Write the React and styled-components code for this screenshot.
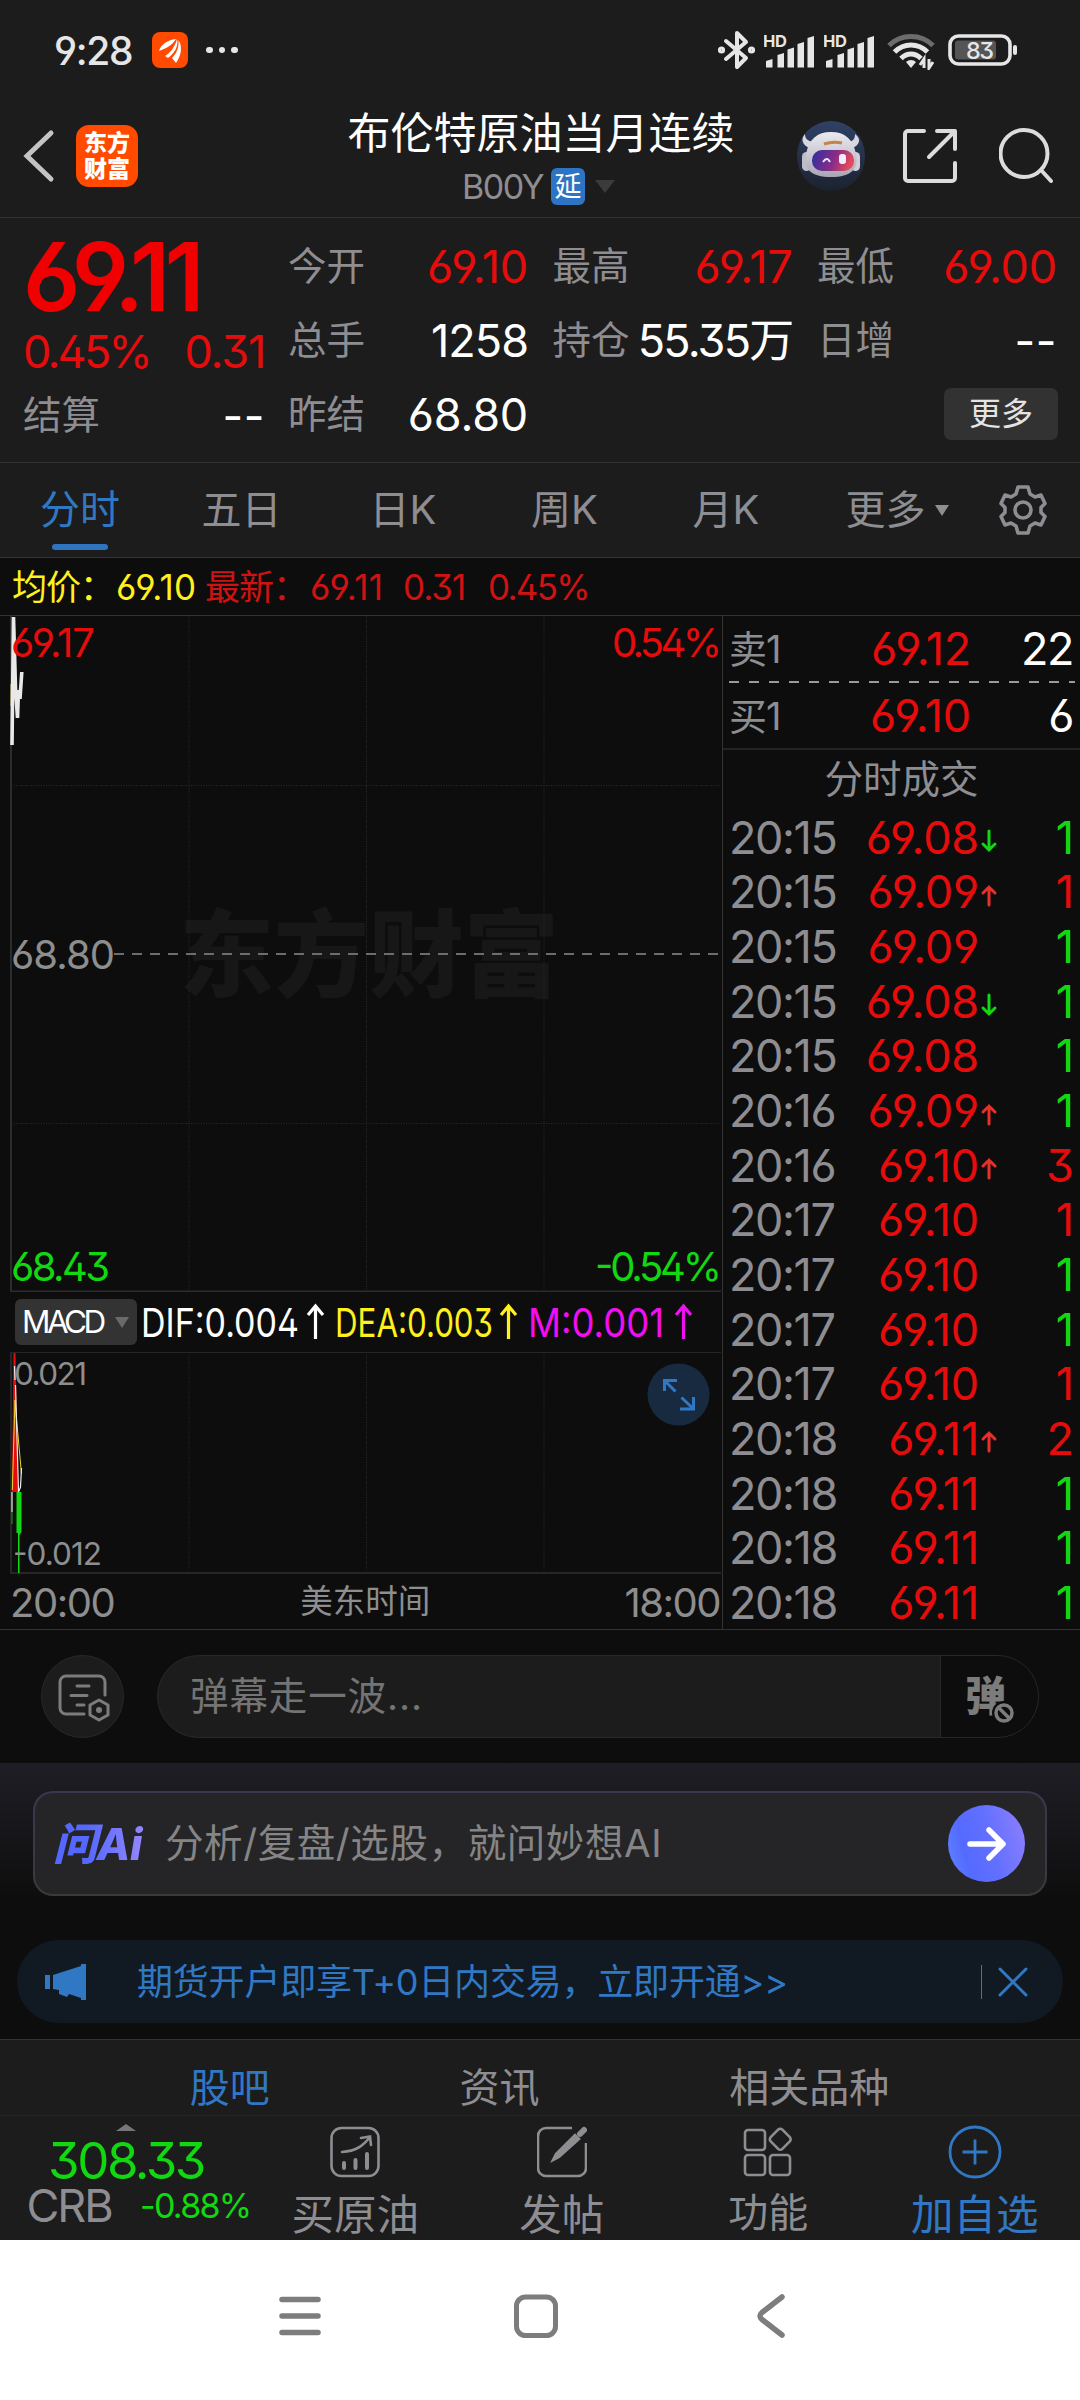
import React from "react";
import styled, { createGlobalStyle } from "styled-components";

const RED = "#e60c0c";
const GREEN = "#12d812";
const GREY = "#8e8d92";
const BLUE = "#3078c4";

const statusBars = [[0, 58], [11.5, 52], [21.5, 46.5], [31.5, 41], [41.5, 35]];

const quotes = [
  { label: "今开", value: "69.10", color: RED },
  { label: "最高", value: "69.17", color: RED },
  { label: "最低", value: "69.00", color: RED },
  { label: "总手", value: "1258", ls: -1 },
  { label: "持仓", value: "55.35万", ls: -1.8 },
  { label: "日增", value: "--", ls: 0.5 },
  { label: "昨结", value: "68.80" },
];

const periods = ["分时", "五日", "日K", "周K", "月K"];

const trades = [
  ["20:15", "69.08", "down", "1", GREEN],
  ["20:15", "69.09", "up", "1", RED],
  ["20:15", "69.09", "", "1", GREEN],
  ["20:15", "69.08", "down", "1", GREEN],
  ["20:15", "69.08", "", "1", GREEN],
  ["20:16", "69.09", "up", "1", GREEN],
  ["20:16", "69.10", "up", "3", RED],
  ["20:17", "69.10", "", "1", RED],
  ["20:17", "69.10", "", "1", GREEN],
  ["20:17", "69.10", "", "1", GREEN],
  ["20:17", "69.10", "", "1", RED],
  ["20:18", "69.11", "up", "2", RED],
  ["20:18", "69.11", "", "1", GREEN],
  ["20:18", "69.11", "", "1", GREEN],
  ["20:18", "69.11", "", "1", GREEN],
];

function Signal() {
  return (
    <svg width="52" height="40" viewBox="0 29 52 40">
      <text x="-1" y="46" fontSize="16.5" fontWeight="700" fill="#e6e6e6" textLength="24">HD</text>
      {statusBars.map(([x, y]) => (
        <path key={x} d={`M${x + 2} 66.5V${y + 2}L${x + 8.5} ${y}V66.5Z`} fill="#e6e6e6" />
      ))}
    </svg>
  );
}

function StatusIcons() {
  return (
    <StatusRight>
      <svg width="38" height="40" viewBox="0 0 38 40" fill="none" stroke="#e6e6e6" strokeWidth="4" strokeLinejoin="round" strokeLinecap="round">
        <path d="M8 11l20 17-9 9V3l9 9L8 29" />
        <circle cx="3.5" cy="20" r="1.6" />
        <circle cx="33.5" cy="20" r="1.6" />
      </svg>
      <Signal />
      <Signal />
      <svg width="48" height="40" viewBox="0 0 48 40" fill="none" strokeWidth="5">
        <path d="M2 15.5C14 3.5 34 3.5 46 15.5" stroke="#6c6c6c" />
        <path d="M7.5 22C17 12.5 31 12.5 40.5 22" stroke="#e6e6e6" />
        <path d="M14 28.5C20 22.5 28 22.5 34 28.5" stroke="#e6e6e6" />
        <path d="M19 32a7 7 0 0 1 10 0l-5 6z" fill="#e6e6e6" />
        <path d="M37 38V29l-4 6M42 29v9l4-6" stroke="#e6e6e6" strokeWidth="3" />
      </svg>
      <svg width="71" height="32" viewBox="0 0 71 32">
        <rect x="2" y="2" width="60" height="28" rx="8.5" fill="none" stroke="#e6e6e6" strokeWidth="3.6" />
        <rect x="7" y="6.5" width="41" height="19" rx="3" fill="#555" />
        <rect x="65" y="11" width="4" height="10" rx="2" fill="#e6e6e6" />
        <text x="18" y="24.5" fontSize="23.5" fontWeight="500" fill="#e6e6e6" textLength="28">83</text>
      </svg>
    </StatusRight>
  );
}

function Robot() {
  return (
    <svg width="68" height="70" viewBox="0 0 68 70">
      <defs>
        <linearGradient id="sky" x1="0" y1="0" x2="0" y2="1">
          <stop offset="0" stopColor="#2f4166" />
          <stop offset="1" stopColor="#1c222e" />
        </linearGradient>
        <linearGradient id="visor" x1="0" y1="0" x2="1" y2="0.2">
          <stop offset="0" stopColor="#2b2f9e" />
          <stop offset="0.6" stopColor="#8a2c86" />
          <stop offset="1" stopColor="#e24a5c" />
        </linearGradient>
        <linearGradient id="shell" x1="0" y1="0" x2="0" y2="1">
          <stop offset="0" stopColor="#eceaf0" />
          <stop offset="1" stopColor="#a9a6b4" />
        </linearGradient>
      </defs>
      <ellipse cx="34" cy="35" rx="34" ry="35" fill="url(#sky)" />
      <path d="M14 28C4 24 4 17 8 13c0 5 3 7 8 8zM54 28c10-4 10-11 4-15 0 5-2 7-6 8z" fill="#d9d7de" />
      <rect x="5" y="31" width="9" height="19" rx="4.5" fill="#bfbdc9" />
      <rect x="54" y="31" width="9" height="19" rx="4.5" fill="#d0ced8" />
      <path d="M34 11c14 0 22 7 25 22 3 15-5 23-25 23S6 48 9 33C12 18 20 11 34 11z" fill="url(#shell)" />
      <rect x="15" y="29" width="42" height="21" rx="10" fill="url(#visor)" />
      <path d="M26 41q4-6 7 0" stroke="#e8e4ff" strokeWidth="2" fill="none" />
      <rect x="42" y="33" width="7" height="10" rx="3" fill="#f2edf7" />
      <path d="M27 23q9-3 18-1" stroke="#c98246" strokeWidth="3" fill="none" />
    </svg>
  );
}

const arrowUp = "M8.5 35V2M1 11L8.5 2L16 11";

function MinuteChart() {
  return (
    <svg width="722" height="676" viewBox="0 616 722 676">
      <text x="179" y="990" fontSize="95" fontWeight="900" fill="#171717">东方财富</text>
      <g stroke="#2b2b2b" strokeDasharray="1 1.5">
        <path d="M189 616V1291M366.5 616V1291M544 616V1291M11 785.5H721M11 1123.5H721" />
      </g>
      <path d="M11 616V1291.5H721" fill="none" stroke="#2c2c2c" strokeWidth="2" />
      <path d="M114 954H721" stroke="#6d6d6d" strokeWidth="2" strokeDasharray="10 8" />
      <path d="M11.5 684V706" stroke="#cfc36a" strokeWidth="2" />
      <path d="M12 745L13.5 617L15.5 688L17.5 718L18.5 690L20 699L21.8 672" fill="none" stroke="#e9e9e9" strokeWidth="3.6" />
      <g fontSize="40">
        <text x="11" y="657" fill={RED} textLength="84">69.17</text>
        <text x="612" y="657" fill={RED} textLength="110">0.54%</text>
        <text x="11" y="969" fill="#8e8e8e" textLength="104">68.80</text>
        <text x="11" y="1281" fill={GREEN} textLength="99">68.43</text>
        <text x="595" y="1281" fill={GREEN} textLength="127">-0.54%</text>
      </g>
    </svg>
  );
}

function MacdChart() {
  return (
    <svg width="722" height="222" viewBox="0 1352 722 222">
      <path d="M189 1352V1573M366.5 1352V1573M544 1352V1573" stroke="#2b2b2b" strokeDasharray="1 1.5" />
      <path d="M11 1352.5H721" stroke="#262626" />
      <path d="M11 1352V1573H721" fill="none" stroke="#262626" strokeWidth="2" />
      <path d="M12 1492L13.5 1353H15.5L18 1492Z" fill="#e60c0c" />
      <path d="M12 1512v12" stroke="#157a15" strokeWidth="1.5" />
      <path d="M16.5 1492h5v40l-2 3v38h-1.5v-40h-1.5z" fill="#12d812" />
      <path d="M12.3 1490L15 1400L16.5 1419L21.5 1474" fill="none" stroke="#e8d72a" />
      <path d="M12 1512V1492M14.5 1366L15 1380M15.5 1385L18.5 1492L20.5 1487L21.5 1468" fill="none" stroke="#efefef" strokeWidth="1.2" />
      <text x="14" y="1385" fontSize="31.5" fill="#8e8e8e" textLength="73">0.021</text>
      <text x="13" y="1565" fontSize="31.5" fill="#8e8e8e" textLength="89">-0.012</text>
      <circle cx="678.5" cy="1394.5" r="31" fill="#172a40" />
      <path d="M664.5 1391V1380.5H677M664.5 1380.5L675.5 1391.5M693.5 1397V1409H680M693.5 1409L681.5 1397.5" fill="none" stroke={BLUE} strokeWidth="3" />
    </svg>
  );
}

function App() {
  return (
    <Screen>
      <GlobalStyle />
      <StatusBar>
        <Clock>9:28</Clock>
        <AppBadge>
          <svg width="36" height="36" viewBox="0 0 36 36" fill="#fff">
            <path d="M7 19c2-7 9-11 17-12-3 5-8 9-17 12zM13 24c5-3 10-9 12-17 2 7-3 15-9 19zM20 26c5-5 7-11 6.5-18C31 15 29 24 24 31z" />
          </svg>
        </AppBadge>
        <Dots><i /><i /><i /></Dots>
        <StatusIcons />
      </StatusBar>

      <TitleBar>
        <BackIcon width="32" height="54" viewBox="0 0 32 54">
          <path d="M28 4L4 27L28 50" fill="none" stroke="#c4c4c4" strokeWidth="5" strokeLinecap="round" />
        </BackIcon>
        <Brand><span>东方</span><span>财富</span></Brand>
        <Heading>
          <h1>布伦特原油当月连续</h1>
          <Symbol>B00Y<Delay>延</Delay><Caret /></Symbol>
        </Heading>
        <HeaderIcons>
          <Robot />
          <svg width="54" height="54" viewBox="0 0 54 54" fill="none" stroke="#dcdcdc" strokeWidth="4" strokeLinecap="round" strokeLinejoin="round">
            <path d="M21 2H5a3 3 0 0 0-3 3V49a3 3 0 0 0 3 3H49a3 3 0 0 0 3-3V34M34 2H52V20M51 3L26 28" />
          </svg>
          <svg width="54" height="56" viewBox="0 0 54 56" fill="none" stroke="#dcdcdc" strokeWidth="4" strokeLinecap="round">
            <circle cx="25" cy="25.5" r="23.5" />
            <path d="M42 42L52 53" />
          </svg>
        </HeaderIcons>
      </TitleBar>

      <QuotePanel>
        <PriceBlock>
          <LastPrice>69.11</LastPrice>
          <Change><span>0.45%</span><span>0.31</span></Change>
          <Quote><label>结算</label><Num $ls={0.5}>--</Num></Quote>
        </PriceBlock>
        <QuoteGrid>
          {quotes.map((q) => (
            <Quote key={q.label} $color={q.color}>
              <label>{q.label}</label>
              <Num $ls={q.ls}>{q.value}</Num>
            </Quote>
          ))}
          <MoreButton>更多</MoreButton>
        </QuoteGrid>
      </QuotePanel>

      <PeriodTabs>
        {periods.map((p, i) => <Period key={p} $active={i === 0}>{p}</Period>)}
        <MorePeriods>更多<SmallCaret /></MorePeriods>
        <svg width="48" height="50" viewBox="0 0 48 50" fill="none" stroke={GREY} strokeWidth="3.6" strokeLinejoin="round">
          <path d="M19 2H29L31 9L36 12L42 10L46 18.5L42 22.5V27.5L46 31.5L42 40L36 38L31 41L29 48H19L17 41L12 38L6 40L2 31.5L6 27.5V22.5L2 18.5L6 10L12 12L17 9Z" />
          <circle cx="24" cy="25" r="8" />
        </svg>
      </PeriodTabs>

      <AverageBar>
        <Avg $w={104} $color="#fff01e">均价：</Avg>
        <Avg $w={89} $ls={0.2} $color="#fff01e">69.10</Avg>
        <Avg $w={105} $color="#d01212">最新：</Avg>
        <Avg $w={93} $ls={0.4} $color="#d01212">69.11</Avg>
        <Avg $w={85} $color="#d01212">0.31</Avg>
        <Avg $w={110} $ls={-1.7} $color="#d01212">0.45%</Avg>
      </AverageBar>

      <Market>
        <Charts>
          <MinuteChart />
          <IndicatorBar>
            <IndicatorButton>MACD<SmallCaret $dim /></IndicatorButton>
            <svg width="580" height="50" viewBox="0 0 580 50" fontSize="39.5">
              <text x="1" y="40" fill="#fff" textLength="158" lengthAdjust="spacingAndGlyphs">DIF:0.004</text>
              <text x="195" y="40" fill="#fff01e" textLength="158" lengthAdjust="spacingAndGlyphs">DEA:0.003</text>
              <text x="388" y="40" fill="#f20ef2" textLength="136" lengthAdjust="spacingAndGlyphs">M:0.001</text>
              <g fill="none" strokeWidth="3.2">
                <path transform="translate(167 7)" d={arrowUp} stroke="#fff" />
                <path transform="translate(360 7)" d={arrowUp} stroke="#fff01e" />
                <path transform="translate(535 7)" d={arrowUp} stroke="#f20ef2" />
              </g>
            </svg>
          </IndicatorBar>
          <MacdChart />
          <TimeAxis><span>20:00</span><small>美东时间</small><span>18:00</span></TimeAxis>
        </Charts>
        <Book>
          <BookRow><label>卖1</label><Num $color={RED}>69.12</Num><Num $ls={-1.5}>22</Num></BookRow>
          <svg width="346" height="2"><path d="M0 1H346" stroke="#9a9a9a" strokeWidth="2" strokeDasharray="10 10" /></svg>
          <BookRow><label>买1</label><Num $color={RED}>69.10</Num><Num $ls={-1.5}>6</Num></BookRow>
          <TradesTitle>分时成交</TradesTitle>
          {trades.map(([time, price, dir, qty, color], i) => (
            <Trade key={i}>
              <Num $ls={-1.4} $color={GREY}>{time}</Num>
              <Num $color={RED}>{price}</Num>
              <svg width="18" height="24" viewBox="0 0 18 24" fill="none" strokeWidth="3" strokeLinecap="round">
                {dir === "up" && <path d="M9 21V3M3 9L9 3L15 9" stroke="#e8302a" />}
                {dir === "down" && <path d="M9 2V21M3 15L9 21L15 15" stroke={GREEN} />}
              </svg>
              <Num $ls={-1} $color={color}>{qty}</Num>
            </Trade>
          ))}
        </Book>
      </Market>

      <CommentBar>
        <RoundButton>
          <svg width="52" height="48" viewBox="0 0 52 48" fill="none" stroke="#7c7c7c" strokeWidth="3" strokeLinecap="round">
            <path d="M26 40H8a6 6 0 0 1-6-6V8a6 6 0 0 1 6-6H41a6 6 0 0 1 6 6V21M19 12H31M13 21.5H29M19 31H26" />
            <path d="M41 26L50 31V41L41 46L32 41V31Z" strokeLinejoin="round" />
            <circle cx="41" cy="36" r="1.5" />
          </svg>
        </RoundButton>
        <CommentInput>
          <span>弹幕走一波...</span>
          <Barrage>
            弹
            <svg width="24" height="24" viewBox="0 0 24 24">
              <circle cx="12" cy="12" r="12" fill="#0d0d0d" />
              <circle cx="12" cy="12" r="8" fill="none" stroke="#7c7c7c" strokeWidth="3.5" />
              <path d="M7 7L17 17" stroke="#7c7c7c" strokeWidth="3.5" />
            </svg>
          </Barrage>
        </CommentInput>
      </CommentBar>

      <AiSection>
        <AiBox>
          <AiLogo>问Ai</AiLogo>
          <span>分析/复盘/选股，就问妙想AI</span>
          <GoButton>
            <svg width="42" height="40" viewBox="0 0 42 40" fill="none" stroke="#fff" strokeWidth="5.5" strokeLinecap="round" strokeLinejoin="round">
              <path d="M4 20H37M23 6L37 20L23 34" />
            </svg>
          </GoButton>
        </AiBox>
      </AiSection>

      <Promo>
        <svg width="44" height="38" viewBox="0 0 44 38" fill={BLUE}>
          <path d="M1 12h5v14H1zM9 12L37 3V1h5V37h-5V35L25 31L23 34L15 31V27L9 26z" />
        </svg>
        <span>期货开户即享T+0日内交易，立即开通&gt;&gt;</span>
        <Rule />
        <svg width="30" height="30" viewBox="0 0 30 30" stroke={BLUE} strokeWidth="3" strokeLinecap="round">
          <path d="M2 2L28 28M28 2L2 28" />
        </svg>
      </Promo>

      <SectionTabs>
        <Section $active>股吧</Section>
        <Section>资讯</Section>
        <Section>相关品种</Section>
      </SectionTabs>

      <BottomBar>
        <IndexBox>
          <UpCaret />
          <IndexValue>308.33</IndexValue>
          <IndexName><b>CRB</b><em>-0.88%</em></IndexName>
        </IndexBox>
        <Action>
          <svg width="50" height="52" viewBox="0 0 50 52" fill="none" stroke={GREY} strokeWidth="2.6" strokeLinecap="round">
            <rect x="1.5" y="2" width="47" height="48" rx="10" />
            <path d="M12 26C26 25 33 20 40 11M31 12L40 10.5L41 19" />
            <path d="M14 37V42M25.5 34V42M37 28V42" strokeWidth="4" />
          </svg>
          买原油
        </Action>
        <Action>
          <svg width="50" height="52" viewBox="0 0 50 52" fill="none" stroke={GREY} strokeWidth="2.6">
            <path d="M35 2H9a8 8 0 0 0-8 8V42a8 8 0 0 0 8 8H41a8 8 0 0 0 8-8V17" />
            <path d="M16 34L19 28L38 9L42 13L22 31Z" fill={GREY} />
            <path d="M43 8L47 4" strokeWidth="6" strokeLinecap="round" />
          </svg>
          发帖
        </Action>
        <Action $size={40}>
          <svg width="50" height="52" viewBox="0 0 50 52" fill="none" stroke={GREY} strokeWidth="2.6">
            <rect x="2" y="4" width="20" height="20" rx="3" />
            <rect x="2" y="29" width="20" height="20" rx="3" />
            <rect x="27" y="29" width="20" height="20" rx="3" />
            <rect x="29" y="5" width="16.5" height="16.5" rx="3" transform="rotate(45 37.25 13.25)" />
          </svg>
          功能
        </Action>
        <Action $color={BLUE}>
          <svg width="54" height="54" viewBox="0 0 54 54" fill="none" stroke={BLUE} strokeWidth="2.8">
            <circle cx="27" cy="27" r="25" />
            <path d="M14.5 27H39.5M27 14.5V39.5" />
          </svg>
          加自选
        </Action>
      </BottomBar>

      <SystemNav>
        <svg width="44" height="46" viewBox="0 0 44 46" stroke="#7d7d7d" strokeWidth="5.5" strokeLinecap="round">
          <path d="M4 6.5H40M4 23H40M4 39.5H40" />
        </svg>
        <svg width="46" height="46" viewBox="0 0 46 46" fill="none" stroke="#7d7d7d" strokeWidth="5">
          <rect x="3.5" y="4" width="39" height="38.5" rx="9" />
        </svg>
        <svg width="30" height="46" viewBox="0 0 30 46" fill="none" stroke="#7d7d7d" strokeWidth="5.5" strokeLinecap="round" strokeLinejoin="round">
          <path d="M26 4L6 19.5Q2 23 6 26.5L26 42" />
        </svg>
      </SystemNav>
    </Screen>
  );
}

export default App;

const GlobalStyle = createGlobalStyle`
    body {
        margin: 0;
        background: #0d0d0d;
    }

    * {
        box-sizing: border-box;
    }

    svg {
        display: block;
        flex: none;
    }
`;

const Screen = styled.div`
    width: 1080px;
    height: 2400px;
    display: flex;
    flex-direction: column;
    overflow: hidden;
    background: #0d0d0d;
    color: #fff;
    font-family: Inter, "Noto Sans CJK SC", sans-serif;
    font-feature-settings: "cv03", "cv04", "cv09", "ss01";
    line-height: 1;
    white-space: nowrap;
`;

const StatusBar = styled.div`
    height: 100px;
    flex: none;
    display: flex;
    align-items: center;
    padding: 0 61px 0 54px;
    background: #1c1c1c;
`;

const Clock = styled.span`
    width: 98px;
    font-size: 39px;
    font-weight: 500;
    letter-spacing: -1.3px;
    color: #e6e6e6;
`;

const AppBadge = styled.span`
    width: 36px;
    height: 36px;
    border-radius: 8px;
    background: #ff4a00;
`;

const Dots = styled.span`
    display: flex;
    gap: 6px;
    margin-left: 18px;

    i {
        width: 6.5px;
        height: 6.5px;
        border-radius: 50%;
        background: #e6e6e6;
    }
`;

const StatusRight = styled.div`
    display: flex;
    align-items: center;
    margin-left: auto;

    svg:nth-child(2), svg:nth-child(3) {
        margin-left: 8px;
    }

    svg:nth-child(4) {
        margin-left: 11px;
    }

    svg:nth-child(5) {
        margin-left: 13px;
    }
`;

const TitleBar = styled.header`
    height: 118px;
    flex: none;
    display: flex;
    align-items: flex-start;
    padding: 0 27px 0 23px;
    background: #1c1c1c;
    border-bottom: 1px solid #333;
`;

const BackIcon = styled.svg`
    margin-top: 29px;
`;

const Brand = styled.div`
    width: 62px;
    height: 62px;
    margin: 25px 0 0 21px;
    padding-top: 5px;
    border-radius: 13px;
    background: #ff4a00;
    text-align: center;
    font-size: 23px;
    font-weight: 900;
    line-height: 26px;

    span {
        display: block;
    }
`;

const Heading = styled.div`
    width: 430px;
    margin-left: 188px;
    padding-top: 12px;
    text-align: center;

    h1 {
        margin: 0;
        font-size: 43px;
        font-weight: 400;
        line-height: 43px;
    }
`;

const Symbol = styled.div`
    display: flex;
    align-items: center;
    justify-content: center;
    margin: 13px 5px 0 0;
    font-size: 34px;
    letter-spacing: -1.5px;
    color: ${GREY};
`;

const Delay = styled.span`
    width: 34px;
    height: 37px;
    margin-left: 8px;
    border-radius: 6px;
    background: #2e74c4;
    color: #fff;
    font-size: 27px;
    line-height: 37px;
    letter-spacing: 0;
    text-align: center;
`;

const Caret = styled.i`
    margin-left: 10px;
    border: 10px solid transparent;
    border-top: 13px solid #3b3b3b;
    border-bottom: 0;
`;

const SmallCaret = styled.i`
    margin-left: ${(p) => (p.$dim ? 12 : 9)}px;
    border: 7px solid transparent;
    border-top: 11px solid ${(p) => (p.$dim ? "#6a6a6a" : GREY)};
    border-bottom: 0;
`;

const HeaderIcons = styled.div`
    display: flex;
    align-items: center;
    margin: 21px 0 0 auto;

    svg:nth-child(2) {
        margin: 0 42px 0 38px;
    }
`;

const Num = styled.span`
    font-size: 45px;
    letter-spacing: ${(p) => p.$ls ?? -0.2}px;
    color: ${(p) => p.$color || "inherit"};
`;

const QuotePanel = styled.section`
    height: 245px;
    flex: none;
    display: flex;
    padding: 11px 21px 0 23px;
    background: #1c1c1c;
    border-bottom: 1px solid #333;
`;

const PriceBlock = styled.div`
    width: 242px;
    margin-right: 23px;
    display: flex;
    flex-direction: column;
`;

const LastPrice = styled.div`
    height: 95px;
    font-size: 95px;
    font-weight: 600;
    line-height: 96px;
    letter-spacing: -5.8px;
    color: #f00000;
`;

const Change = styled.div`
    display: flex;
    justify-content: space-between;
    height: 54px;
    font-size: 45px;
    line-height: 56px;
    letter-spacing: -2.8px;
    color: ${RED};

    span + span {
        letter-spacing: -1.2px;
    }
`;

const Quote = styled.div`
    height: 74px;
    display: flex;
    align-items: center;
    justify-content: space-between;
    color: ${(p) => p.$color || "#fff"};

    label {
        font-size: 38.5px;
        color: ${GREY};
    }
`;

const QuoteGrid = styled.div`
    display: grid;
    grid-template-columns: 240px 240px 240px;
    grid-auto-rows: 74px;
    column-gap: 24.5px;
`;

const MoreButton = styled.button`
    grid-column: 3;
    align-self: center;
    justify-self: end;
    width: 114px;
    height: 52px;
    margin-right: -1px;
    border: 0;
    border-radius: 7px;
    background: #323232;
    color: #e4e4e4;
    font: inherit;
    font-size: 32px;
`;

const PeriodTabs = styled.nav`
    height: 95px;
    flex: none;
    display: flex;
    align-items: center;
    padding-right: 33px;
    background: #1c1c1c;
    border-bottom: 1px solid #333;
    font-size: 40px;
    color: ${GREY};

    svg {
        margin-left: auto;
    }
`;

const Period = styled.div`
    width: 161.5px;
    height: 94px;
    padding-right: 1.5px;
    line-height: 94px;
    text-align: center;
    color: ${(p) => (p.$active ? BLUE : GREY)};

    &::after {
        content: "";
        display: ${(p) => (p.$active ? "block" : "none")};
        width: 56px;
        height: 6px;
        margin: -13px auto 0;
        border-radius: 3px;
        background: #2f74c0;
    }
`;

const MorePeriods = styled.div`
    display: flex;
    align-items: center;
    margin-left: 38px;
`;

const AverageBar = styled.div`
    height: 58px;
    flex: none;
    display: flex;
    align-items: center;
    padding: 2px 0 0 12px;
    border-bottom: 1px solid #333;
    font-size: 35px;
`;

const Avg = styled.span`
    width: ${(p) => p.$w}px;
    letter-spacing: ${(p) => p.$ls ?? -1}px;
    color: ${(p) => p.$color};
`;

const Market = styled.section`
    height: 1014px;
    flex: none;
    display: flex;
    border-bottom: 1px solid #333;
`;

const Charts = styled.div`
    width: 723px;
    border-right: 1px solid #333;
`;

const IndicatorBar = styled.div`
    height: 60px;
    display: flex;
    align-items: center;
    padding: 0 0 0 15px;
`;

const IndicatorButton = styled.div`
    width: 122px;
    height: 46px;
    margin-right: 3px;
    padding-left: 7px;
    display: flex;
    align-items: center;
    border-radius: 6px;
    background: #333;
    font-size: 31.5px;
    letter-spacing: -3.5px;
`;

const TimeAxis = styled.div`
    height: 55px;
    display: flex;
    align-items: center;
    justify-content: space-between;
    padding: 2px 2px 0 10px;
    font-size: 40px;
    letter-spacing: -1.5px;
    color: #8e8e8e;

    small {
        margin-right: 8px;
        font-size: 32.5px;
        letter-spacing: 0;
    }
`;

const Book = styled.div`
    width: 357px;
    padding: 0 7px 0 6px;
`;

const BookRow = styled.div`
    height: 65px;
    display: grid;
    grid-template-columns: 80px 162px 1fr;
    align-items: center;
    text-align: right;

    label {
        font-size: 38px;
        letter-spacing: -1px;
        text-align: left;
        color: ${GREY};
    }
`;

const TradesTitle = styled.div`
    height: 62px;
    margin: 0 -7px 0 -6px;
    border-top: 2px solid #232323;
    font-size: 38.5px;
    line-height: 59px;
    text-align: center;
    color: ${GREY};
`;

const Trade = styled.div`
    height: 54.65px;
    display: grid;
    grid-template-columns: 111px 139px 18px 1fr;
    align-items: center;
    text-align: right;

    span:first-child {
        text-align: left;
    }

    svg {
        margin: 8px 0 0 1px;
    }
`;

const CommentBar = styled.div`
    height: 133px;
    flex: none;
    display: flex;
    align-items: center;
    padding: 0 41px;
    gap: 33px;
`;

const RoundButton = styled.div`
    width: 83px;
    height: 83px;
    display: flex;
    align-items: center;
    justify-content: center;
    padding: 2px 0 0 2px;
    border: 1px solid #282828;
    border-radius: 50%;
    background: #1c1c1c;
`;

const CommentInput = styled.div`
    flex: 1;
    height: 83px;
    display: flex;
    align-items: center;
    justify-content: space-between;
    padding-left: 32px;
    overflow: hidden;
    border: 1px solid #282828;
    border-radius: 42px;
    background: #1c1c1c;
    font-size: 38.5px;
    letter-spacing: 0.9px;
    color: #747474;
`;

const Barrage = styled.div`
    width: 98px;
    height: 83px;
    display: flex;
    align-items: center;
    padding-left: 24px;
    border-left: 1px solid #282828;
    background: #0d0d0d;
    font-size: 41px;
    font-weight: 900;
    letter-spacing: 0;
    color: #7c7c7c;

    svg {
        margin: 32px 0 0 -14px;
    }
`;

const AiSection = styled.div`
    height: 177px;
    flex: none;
    padding: 28px 33px 0;
    background: linear-gradient(#1f1e25, #0d0d0d 80%);
`;

const AiBox = styled.div`
    height: 105px;
    display: flex;
    align-items: center;
    padding: 0 20px 0 18px;
    border: 2px solid transparent;
    border-radius: 20px;
    background: linear-gradient(#252528, #252528) padding-box, linear-gradient(#3b3753, #3a3a3a) border-box;
    font-size: 38.5px;
    letter-spacing: 0.6px;
    color: #858585;
`;

const AiLogo = styled.div`
    width: 112px;
    font-size: 44px;
    font-weight: 800;
    font-style: italic;
    letter-spacing: -0.5px;
    background: linear-gradient(90deg, #5468ff 30%, #a08cff 90%);
    background-clip: text;
    color: transparent;
`;

const GoButton = styled.div`
    width: 77px;
    height: 77px;
    margin-left: auto;
    display: flex;
    align-items: center;
    justify-content: center;
    border-radius: 50%;
    background: linear-gradient(75deg, #6288ff, #546aff 25%, #6270ff 55%, #9080ff);
`;

const Promo = styled.div`
    height: 83px;
    flex: none;
    display: flex;
    align-items: center;
    margin: 0 17px 16px;
    padding: 0 35px 0 27px;
    border-radius: 42px;
    background: #111a23;
    font-size: 36px;
    letter-spacing: -0.2px;
    color: ${BLUE};

    span {
        margin-left: 49px;
    }
`;

const Rule = styled.i`
    width: 1px;
    height: 34px;
    margin: 0 16px 0 auto;
    background: ${BLUE};
`;

const SectionTabs = styled.nav`
    height: 77px;
    flex: none;
    display: flex;
    justify-content: space-evenly;
    padding: 10px 1px 0 0;
    border-top: 1px solid #333;
    border-bottom: 1px solid #262626;
    background: #1c1c1c;
    font-size: 40px;
    line-height: 76px;
`;

const Section = styled.div`
    color: ${(p) => (p.$active ? BLUE : GREY)};
`;

const BottomBar = styled.footer`
    height: 124px;
    flex: none;
    display: flex;
    background: #1c1c1c;
`;

const IndexBox = styled.div`
    width: 252px;
    display: flex;
    flex-direction: column;
    align-items: center;
    color: ${GREEN};
`;

const UpCaret = styled.i`
    margin-top: 8px;
    border: 10px solid transparent;
    border-bottom: 7px solid #77767a;
    border-top: 0;
`;

const IndexValue = styled.div`
    margin-top: 4px;
    font-size: 51px;
    letter-spacing: -2.5px;
`;

const IndexName = styled.div`
    width: 224px;
    margin: -3px 0 0 25px;
    display: flex;
    align-items: center;
    justify-content: space-between;

    b {
        font-size: 45px;
        font-weight: 400;
        letter-spacing: -2px;
        color: ${GREY};
    }

    em {
        font-size: 34px;
        font-style: normal;
        letter-spacing: -1.7px;
    }
`;

const Action = styled.div`
    width: 206.5px;
    display: flex;
    flex-direction: column;
    align-items: center;
    padding-top: 9px;
    font-size: ${(p) => p.$size || 42.5}px;
    line-height: 54px;
    color: ${(p) => p.$color || GREY};

    svg {
        height: 54px;
        margin-bottom: ${(p) => (p.$size ? 7 : 9)}px;
    }
`;

const SystemNav = styled.nav`
    height: 160px;
    flex: none;
    display: flex;
    align-items: center;
    padding: 0 0 8px 278px;
    background: #fff;

    svg:nth-child(2) {
        margin: 0 197px 0 191px;
    }
`;
